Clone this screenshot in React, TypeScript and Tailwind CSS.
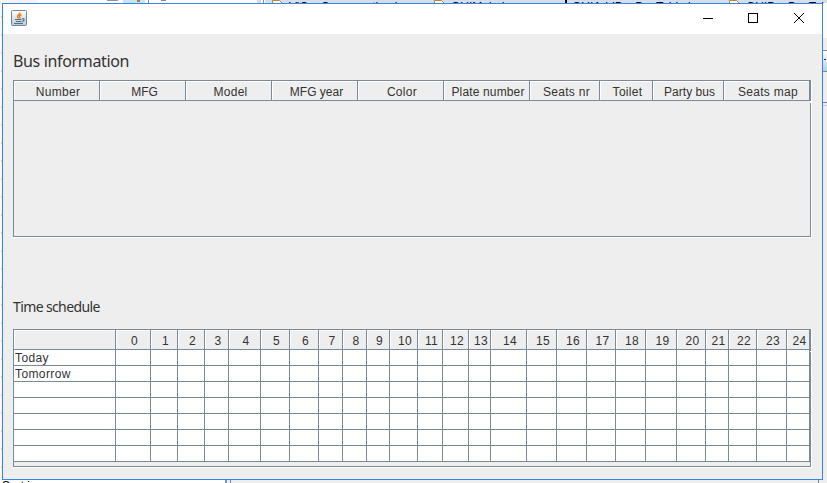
const busCols: [string, number, string?][] = [
  ['Number', 86], ['MFG', 86, 'tracking-normal pl-px'], ['Model', 86, 'pl-px'], ['MFG year', 86, 'tracking-normal pl-px'], ['Color', 86],
  ['Plate number', 86, 'tracking-[0.15px]'], ['Seats nr', 70, 'pl-px'], ['Toilet', 53], ['Party bus', 71, 'tracking-[0.05px]'], ['Seats map', 86],
];
const hourWidths = [102, 35, 27, 27, 24, 32, 29, 29, 24, 24, 23, 28, 25, 26, 22, 36, 30, 30, 29, 30, 31, 29, 23, 28, 30, 23];
const hourCols: [string, number, string?][] = hourWidths.map((w, i) => [i === 0 ? '' : String(i - 1), w]);
const rows = ['Today', 'Tomorrow', '', '', '', '', ''];

function Header({ cols }: { cols: [string, number, string?][] }) {
  return (
    <div className="flex h-5">
      {cols.map(([label, width, spacing], i) => (
        <div
          key={i}
          style={{ width }}
          className="flex h-5 shrink-0 justify-center border-r border-b border-[#7a8a99] whitespace-nowrap"
        >
          <div className="flex flex-1 justify-center border-t border-l border-white pt-[2px] pl-[2px] text-[12px] leading-[16px] tracking-[0.3px]">
            <span className={spacing}>{label}</span>
          </div>
        </div>
      ))}
    </div>
  );
}

function JavaIcon() {
  return (
    <svg width="16" height="16" viewBox="0 0 16 16" className="block">
      <defs>
        <linearGradient id="tile" x1="0" y1="0" x2="0" y2="1">
          <stop offset="0" stopColor="#fff" />
          <stop offset="1" stopColor="#bcc9d4" />
        </linearGradient>
      </defs>
      <rect x=".5" y=".5" width="15" height="15" rx="1" fill="url(#tile)" stroke="#6c879d" />
      <path d="M9 2.500c.6 2-3.200 2.400-2.500 4.200.2.700 1 1 1.100 1.800M10.500 4.800c-2.500.8-2.300 1.700-1.700 2.500.3.400.1.900-.2 1.200" fill="none" stroke="#ec7a20" strokeWidth="1.500" />
      <path d="M4 9.500h6.500M5 11.500h5.500M3 13.500h9M11 8.800c2.900-.5 2.600 2 .2 2.500" fill="none" stroke="#4b7089" strokeWidth="1.200" />
    </svg>
  );
}

function FileTab({ label, className }: { label: string; className: string }) {
  return (
    <div className={`flex h-3 shrink-0 gap-[5px] overflow-hidden ${className}`}>
      <svg width="12" height="12" className="block shrink-0">
        <path d="M.5 12V.5h7l4 4V12" fill="#fffdf2" stroke="#b58a30" />
      </svg>
      <span className="pt-px text-[12px] leading-[12px] whitespace-nowrap text-black">{label}</span>
    </div>
  );
}

export default function App() {
  return (
    <div className="flex h-[483px] w-[827px] flex-col overflow-hidden bg-[#eeeeee] font-['Liberation_Sans',Arial,sans-serif] text-[#333333]">
      <div className="flex h-[3px] shrink-0 overflow-hidden bg-[#d3deed]">
        <div className="flex w-[265px] shrink-0 bg-white">
          <div className="w-[38px] bg-[#f5f5f7]" />
          <div className="ml-[69px] h-px w-[11px] bg-[#8a94a6]" />
          <div className="ml-[5px] w-[22px] bg-[#c5e3fa] pl-[14px]">
            <div className="h-[2px] w-[3px] bg-[#a88230]" />
          </div>
          <div className="ml-[3px] w-px bg-[#888]" />
          <div className="ml-[12px] h-px w-[5px] bg-[#888]" />
          <div className="ml-[91px] w-[4px] bg-[#d8d8e0]" />
          <div className="ml-[2px] w-px bg-[#8a8a99]" />
        </div>
        <FileTab label="ViCusConsumption.ja" className="ml-[7px] w-[162px]" />
        <FileTab label="GUIMain.ja" className="w-[131px]" />
        <div className="w-[2px] bg-black" />
        <div className="w-[162px] overflow-hidden pt-px pl-[5px] text-[12px] leading-[12px] whitespace-nowrap text-black">GUIAddBusBusTable.ja</div>
        <FileTab label="GUIBusBusTabl" className="w-[98px]" />
      </div>

      <div className="flex h-[477px] shrink-0">
        <div className="flex w-[2px] shrink-0 flex-col gap-[16px] bg-[#f8f8fa] pt-[13px]">
          {Array.from({ length: 26 }, (_, i) => (
            <div key={i} className="ml-px h-[2px] w-px shrink-0 bg-[#e3d6ae]" />
          ))}
        </div>

        <main className="flex w-[821px] shrink-0 flex-col border border-[#3b82e6] bg-[#eeeeee]">
          <div className="flex h-[30px] shrink-0 items-start bg-white pt-[6px] pl-[8px]">
            <JavaIcon />
            <svg width="103" height="12" viewBox="0 0 103 12" className="mt-[2px] ml-[676px] block shrink-0" fill="none" stroke="#000" shapeRendering="crispEdges">
              <path d="M0 6.500h10M45.500 1.500h9v9h-9z" />
              <path d="M91 1l10 10M101 1L91 11" shapeRendering="auto" />
            </svg>
          </div>

          <h1 className="mt-[16px] ml-[10px] h-[30px] font-['Noto_Sans',sans-serif] text-[16px] leading-[22px] tracking-[-0.35px] whitespace-nowrap">Bus information</h1>

          <section className="relative ml-[10px] flex h-[158px] w-[799px] shrink-0 flex-col border-r border-b border-white">
            <div className="h-[157px] border border-[#7a8a99]">
              <Header cols={busCols} />
            </div>
            <div className="absolute top-[21px] right-0 h-[2px] w-px bg-white" />
          </section>

          <h2 className="mt-[59px] ml-[10px] h-[32px] shrink-0 font-['Noto_Sans',sans-serif] text-[14px] leading-[20px] tracking-[-0.62px] whitespace-nowrap">Time schedule</h2>

          <section className="relative ml-[10px] flex h-[139px] w-[799px] shrink-0 flex-col border-r border-b border-white">
            <div className="h-[138px] border border-[#7a8a99]">
              <Header cols={hourCols} />
              {rows.map((row, r) => (
                <div key={r} className="flex h-4 bg-white">
                  {hourCols.map(([, width], c) => (
                    <div key={c} style={{ width }} className="h-4 shrink-0 border-r border-b border-[#7a8a99] pt-px pl-px text-[12px] leading-[15px] tracking-[0.4px]">
                      {c === 0 ? row : ''}
                    </div>
                  ))}
                </div>
              ))}
            </div>
            <div className="absolute top-[22px] right-0 h-px w-px bg-white" />
          </section>
        </main>

        <aside className="flex w-[4px] shrink-0 flex-col bg-[#eeeeee]">
          <div className="h-[35px] shrink-0 bg-white" />
          <div className="mt-[12px] h-[22px] shrink-0 border-y border-[#7a8a99] bg-gradient-to-b from-white to-[#b8cfe5]">
            <div className="mt-[8px] ml-px h-px w-[2px] bg-[#333]" />
          </div>
          <div className="mt-[30px] h-px shrink-0 bg-[#6382bf]" />
          <div className="mt-[2px] h-px shrink-0 bg-[#b8cfe5]" />
        </aside>
      </div>

      <div className="flex h-[3px] shrink-0 overflow-hidden">
        <div className="w-[225px] shrink-0 bg-white pl-[2px] text-[12px] leading-[12px] text-black">Sort i</div>
        <div className="w-[2px] bg-[#7894c8]" />
        <div className="ml-[3px] w-px bg-[#7a8a99]" />
        <div className="ml-[587px] w-px bg-[#7a8a99]" />
      </div>
    </div>
  );
}
